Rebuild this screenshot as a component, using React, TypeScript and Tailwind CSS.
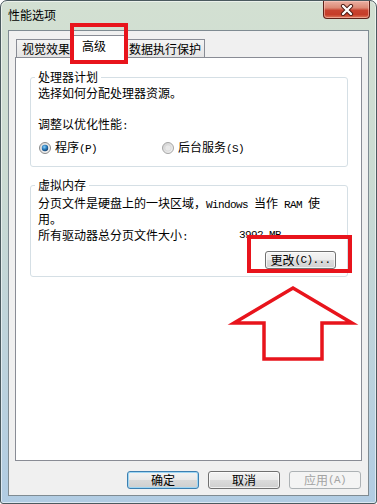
import React from "react";

const cjk = "font-['Noto_Sans_CJK_SC','Noto_Sans',sans-serif]";
const mono = "font-['Liberation_Mono',monospace] text-[11px] tracking-[-0.6px]";

function RadioOn() {
  return (
    <svg width="12" height="12" viewBox="0 0 12 12" className="shrink-0">
      <defs>
        <radialGradient id="rdot" cx="0.4" cy="0.35" r="0.7">
          <stop offset="0" stopColor="#8fd0f5" />
          <stop offset="0.5" stopColor="#2c7fc0" />
          <stop offset="1" stopColor="#123a66" />
        </radialGradient>
        <linearGradient id="rring" x1="0" y1="0" x2="1" y2="1">
          <stop offset="0" stopColor="#d8d8d8" />
          <stop offset="1" stopColor="#f6f6f6" />
        </linearGradient>
      </defs>
      <circle cx="6" cy="6" r="5.5" fill="url(#rring)" stroke="#8a8a8a" strokeWidth="1" />
      <circle cx="6" cy="6" r="3.2" fill="url(#rdot)" />
    </svg>
  );
}

function RadioOff() {
  return (
    <svg width="12" height="12" viewBox="0 0 12 12" className="shrink-0">
      <defs>
        <linearGradient id="roff" x1="0" y1="0" x2="1" y2="1">
          <stop offset="0" stopColor="#cfcfcf" />
          <stop offset="1" stopColor="#f8f8f8" />
        </linearGradient>
      </defs>
      <circle cx="6" cy="6" r="5.5" fill="url(#roff)" stroke="#a5a5a5" strokeWidth="1" />
      <circle cx="6" cy="6" r="3.2" fill="#e9e9e9" stroke="#d0d0d0" strokeWidth="0.6" />
    </svg>
  );
}

export default function App() {
  return (
    <div className={`relative w-[377px] h-[504px] overflow-hidden bg-white ${cjk} text-[12px] text-black`}>
      <div className="w-full h-full rounded-t-[7px] rounded-b-[3px] border border-[#4b5a5f] bg-[linear-gradient(180deg,#d3e0d2_0%,#cbdbd2_35%,#bdd3dc_70%,#b1cce3_100%)] shadow-[inset_0_0_0_1px_rgba(255,255,255,0.55)] flex flex-col">
        {/* title bar */}
        <div className="h-[29px] flex items-start justify-between">
          <div className="pl-[7px] pt-[7px] leading-[14px] text-[12px] text-black">性能选项</div>
          <div className="mr-[6px] w-[47px] h-[18px] rounded-b-[4px] border border-t-0 border-[#5e2219] bg-[linear-gradient(180deg,#eab0a2_0%,#dc8a76_40%,#c84330_55%,#c63c28_80%,#dd7b5e_100%)] flex items-center justify-center shadow-[inset_0_0_0_1px_rgba(255,210,200,0.5)]">
            <svg width="16" height="12" viewBox="0 0 16 12">
              <path d="M4 2 L12 10 M12 2 L4 10" stroke="#4a1a12" strokeWidth="4.2" strokeLinecap="round" />
              <path d="M4 2 L12 10 M12 2 L4 10" stroke="#ffffff" strokeWidth="2.4" strokeLinecap="round" />
            </svg>
          </div>
        </div>
        {/* client area */}
        <div className="mx-[7px] h-[466px] border border-[#7f8b92] bg-[#f0f0f0] flex flex-col px-[6px]">
          {/* tabs */}
          <div className="h-[26px] flex items-end pl-[1px]">
            <div className="w-[56px] h-[18px] border-l border-t border-r border-[#898c95] bg-[linear-gradient(180deg,#f4f4f4,#e4e4e4)] pl-[5px] pt-[2px] leading-[14px] whitespace-nowrap">
              视觉效果
            </div>
            <div className="relative z-10 -ml-[2px] -mr-[2px] -mb-px w-[57px] h-[23px] border-l border-t border-r border-[#898c95] bg-white pl-[11px] pt-[3px] leading-[14px] whitespace-nowrap">
              高级
            </div>
            <div className="w-[80px] h-[18px] border-l border-t border-r border-[#898c95] bg-[linear-gradient(180deg,#f4f4f4,#e4e4e4)] pl-[3px] pt-[2px] leading-[14px] whitespace-nowrap">
              数据执行保护
            </div>
          </div>
          {/* panel */}
          <div className="h-[404px] border border-[#898c95] bg-white flex flex-col">
            <fieldset className="ml-[14px] mr-[13px] mt-[12px] border border-[#d5dfe5] rounded-[3px] px-[7px] pb-[11px]">
              <legend className="-ml-[3px] px-[3px] leading-[14px]">处理器计划</legend>
              <p className="mt-[2px] leading-[14px]">选择如何分配处理器资源。</p>
              <p className="mt-[17px] leading-[14px]">调整以优化性能<span className={mono}>:</span></p>
              <div className="mt-[8px] h-[14px] flex items-center leading-[14px]">
                <div className="w-[124px] flex items-center">
                  <span className="ml-[1px]"><RadioOn /></span>
                  <span className="ml-[4px] whitespace-nowrap">程序<span className={mono}>(P)</span></span>
                </div>
                <div className="flex items-center">
                  <RadioOff />
                  <span className="ml-[4px] whitespace-nowrap">后台服务<span className={mono}>(S)</span></span>
                </div>
              </div>
            </fieldset>
            <fieldset className="ml-[14px] mr-[13px] mt-[11px] border border-[#d5dfe5] rounded-[3px] px-[7px] pb-[7px]">
              <legend className="-ml-[3px] px-[3px] leading-[14px]">虚拟内存</legend>
              <p className="mt-[4px] leading-[13px] whitespace-nowrap">
                分页文件是硬盘上的一块区域，<span className={mono}>Windows </span>当作<span className={mono}> RAM </span>使
                <br />
                用。
              </p>
              <div className="mt-[3px] flex leading-[14px]">
                <span className="w-[201px] whitespace-nowrap">所有驱动器总分页文件大小<span className={mono}>:</span></span>
                <span className={`${mono} leading-[14px]`}>3992 MB</span>
              </div>
              <div className="mt-[7px] flex justify-end pr-[4px]">
                <button className="w-[71px] h-[18px] rounded-[3px] border border-[#707070] bg-[linear-gradient(180deg,#f5f5f5_0%,#ececec_48%,#dcdcdc_52%,#d0d0d0_100%)] shadow-[inset_0_0_0_1px_rgba(255,255,255,0.7)] text-[12px] leading-[14px] flex items-center justify-center whitespace-nowrap">
                  更改<span className={mono}>(C)...</span>
                </button>
              </div>
            </fieldset>
          </div>
          {/* bottom buttons */}
          <div className="mt-[10px] flex justify-end gap-[9px] pr-[1px]">
            <button className="w-[72px] h-[18px] rounded-[3px] border border-[#3c7fb1] bg-[linear-gradient(180deg,#f3f3f3_0%,#e9e9e9_48%,#d9d9d9_52%,#cfcfcf_100%)] shadow-[inset_0_0_0_1px_#9fd6f3] text-[12px] leading-[14px] flex items-center justify-center">
              确定
            </button>
            <button className="w-[72px] h-[18px] rounded-[3px] border border-[#707070] bg-[linear-gradient(180deg,#f3f3f3_0%,#ebebeb_48%,#dbdbdb_52%,#cfcfcf_100%)] shadow-[inset_0_0_0_1px_rgba(255,255,255,0.7)] text-[12px] leading-[14px] flex items-center justify-center">
              取消
            </button>
            <button className="w-[72px] h-[18px] rounded-[3px] border border-[#adb2b5] bg-[#f4f4f4] text-[12px] leading-[14px] text-[#a3a3a3] flex items-center justify-center whitespace-nowrap">
              应用<span className={mono}>(A)</span>
            </button>
          </div>
        </div>
      </div>

      {/* red annotations */}
      <div className="absolute left-[70px] top-[23px] w-[58px] h-[41px] border-[4px] border-[#e8141c] pointer-events-none z-20" />
      <div className="absolute left-[247px] top-[235px] w-[105px] h-[38px] border-[4px] border-[#e8141c] pointer-events-none z-20" />
      <svg className="absolute left-0 top-0 pointer-events-none z-20" width="377" height="504" viewBox="0 0 377 504">
        <polygon
          points="293,288 234,323 264,323 264,359 322,359 322,323 352,323"
          fill="none"
          stroke="#e8141c"
          strokeWidth="3.5"
          strokeLinejoin="miter"
        />
      </svg>
    </div>
  );
}
